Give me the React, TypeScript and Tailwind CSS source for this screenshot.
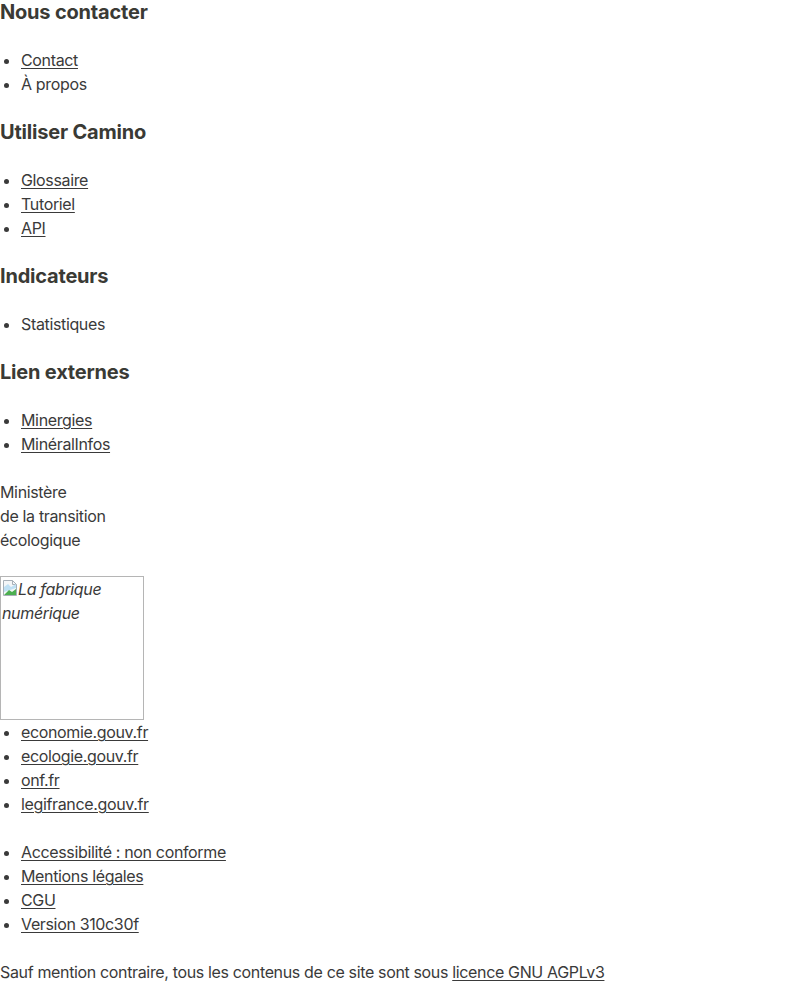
import React from "react";

const Heading = ({ children }: { children: React.ReactNode }) => (
  <h2 className="text-[20px] leading-[24px] font-bold text-[#3a3a35] tracking-[-0.2px] my-6">{children}</h2>
);

const Item = ({ children, link = true }: { children: React.ReactNode; link?: boolean }) => (
  <li className="leading-6">{link ? <a className="underline underline-offset-[2px] decoration-[1px]">{children}</a> : children}</li>
);

const List = ({ children, className = "" }: { children: React.ReactNode; className?: string }) => (
  <ul className={"list-disc pl-[21px] " + className}>{children}</ul>
);

export default function App() {
  return (
    <div className="text-[16px] leading-6 text-[#3a3a3a] tracking-[-0.35px] bg-white min-h-[984px]" style={{ fontFamily: "Inter, 'Noto Sans', sans-serif" }}>
      <h2 className="text-[20px] leading-[24px] font-bold text-[#3a3a35] tracking-[-0.2px] mb-6">Nous contacter</h2>
      <List>
        <Item>Contact</Item>
        <Item link={false}>À propos</Item>
      </List>
      <Heading>Utiliser Camino</Heading>
      <List>
        <Item>Glossaire</Item>
        <Item>Tutoriel</Item>
        <Item>API</Item>
      </List>
      <Heading>Indicateurs</Heading>
      <List>
        <Item link={false}>Statistiques</Item>
      </List>
      <Heading>Lien externes</Heading>
      <List>
        <Item>Minergies</Item>
        <Item>MinéralInfos</Item>
      </List>
      <p className="mt-6">
        Ministère
        <br />
        de la transition
        <br />
        écologique
      </p>
      <div className="mt-6 w-[144px] h-[144px] border border-[#b5b5b5] box-border">
        <div className="italic leading-6 pl-[1px] flex flex-wrap items-start">
          <svg width="16" height="18" viewBox="0 0 16 18" className="shrink-0 mt-[2px]">
            <path d="M1.5 1.5h9l4 4v11h-13z" fill="#f4f6f8" stroke="#a8b0b8" />
            <path d="M10.5 1.5v4h4" fill="none" stroke="#a8b0b8" />
            <path d="M2 8l4-3 3 3 5-3v4l-12 4z" fill="#bfe0f4" />
            <path d="M2 16l5-5 3 2 4-3v6z" fill="#4caf50" />
          </svg>
          <span>La fabrique</span>
          <span className="w-full">numérique</span>
        </div>
      </div>
      <List>
        <Item>economie.gouv.fr</Item>
        <Item>ecologie.gouv.fr</Item>
        <Item>onf.fr</Item>
        <Item>legifrance.gouv.fr</Item>
      </List>
      <List className="mt-6">
        <Item>Accessibilité : non conforme</Item>
        <Item>Mentions légales</Item>
        <Item>CGU</Item>
        <Item>Version 310c30f</Item>
      </List>
      <p className="mt-6">
        Sauf mention contraire, tous les contenus de ce site sont sous{" "}
        <a className="underline underline-offset-[2px]">licence GNU AGPLv3</a>
      </p>
    </div>
  );
}
